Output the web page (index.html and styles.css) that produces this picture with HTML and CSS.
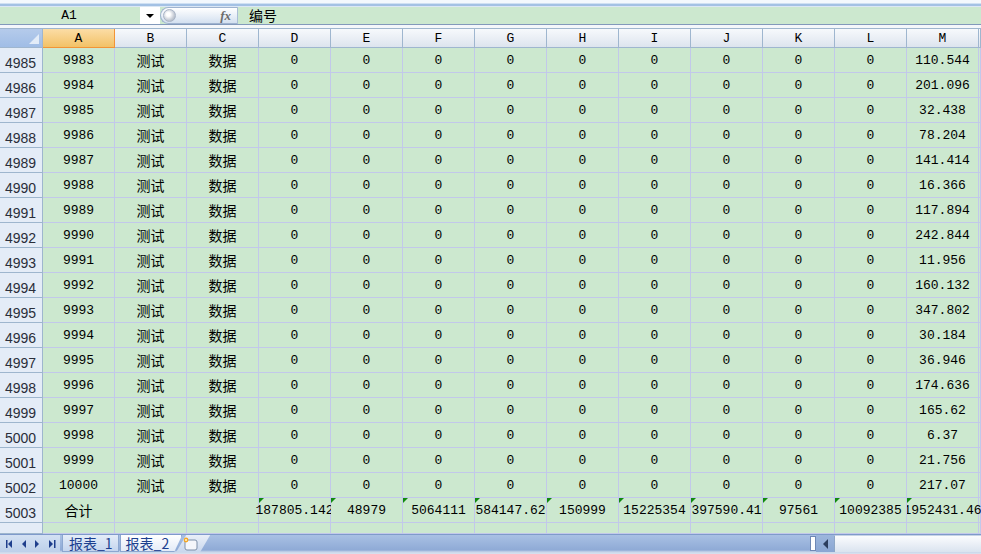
FILE: index.html
```html
<!DOCTYPE html>
<html>
<head>
<meta charset="utf-8">
<link rel="stylesheet" href="styles.css">
</head>
<body>
<div class="ribbon"></div>
<div class="fbar">
  <div class="namebox">A1</div>
  <div class="drop"></div>
  <div class="fxpill"><span class="orb"></span><span class="fx">fx</span></div>
  <div class="formula">编号</div>
</div>
<div class="gap"></div>
<div class="sheet">
  <div class="r h"><span class="corner"></span><span class="sel">A</span><span>B</span><span>C</span><span>D</span><span>E</span><span>F</span><span>G</span><span>H</span><span>I</span><span>J</span><span>K</span><span>L</span><span>M</span><span></span></div>
  <div class="r"><b>4985</b><span>9983</span><span class="zh">测试</span><span class="zh">数据</span><span>0</span><span>0</span><span>0</span><span>0</span><span>0</span><span>0</span><span>0</span><span>0</span><span>0</span><span>110.544</span><span></span></div>
  <div class="r"><b>4986</b><span>9984</span><span class="zh">测试</span><span class="zh">数据</span><span>0</span><span>0</span><span>0</span><span>0</span><span>0</span><span>0</span><span>0</span><span>0</span><span>0</span><span>201.096</span><span></span></div>
  <div class="r"><b>4987</b><span>9985</span><span class="zh">测试</span><span class="zh">数据</span><span>0</span><span>0</span><span>0</span><span>0</span><span>0</span><span>0</span><span>0</span><span>0</span><span>0</span><span>32.438</span><span></span></div>
  <div class="r"><b>4988</b><span>9986</span><span class="zh">测试</span><span class="zh">数据</span><span>0</span><span>0</span><span>0</span><span>0</span><span>0</span><span>0</span><span>0</span><span>0</span><span>0</span><span>78.204</span><span></span></div>
  <div class="r"><b>4989</b><span>9987</span><span class="zh">测试</span><span class="zh">数据</span><span>0</span><span>0</span><span>0</span><span>0</span><span>0</span><span>0</span><span>0</span><span>0</span><span>0</span><span>141.414</span><span></span></div>
  <div class="r"><b>4990</b><span>9988</span><span class="zh">测试</span><span class="zh">数据</span><span>0</span><span>0</span><span>0</span><span>0</span><span>0</span><span>0</span><span>0</span><span>0</span><span>0</span><span>16.366</span><span></span></div>
  <div class="r"><b>4991</b><span>9989</span><span class="zh">测试</span><span class="zh">数据</span><span>0</span><span>0</span><span>0</span><span>0</span><span>0</span><span>0</span><span>0</span><span>0</span><span>0</span><span>117.894</span><span></span></div>
  <div class="r"><b>4992</b><span>9990</span><span class="zh">测试</span><span class="zh">数据</span><span>0</span><span>0</span><span>0</span><span>0</span><span>0</span><span>0</span><span>0</span><span>0</span><span>0</span><span>242.844</span><span></span></div>
  <div class="r"><b>4993</b><span>9991</span><span class="zh">测试</span><span class="zh">数据</span><span>0</span><span>0</span><span>0</span><span>0</span><span>0</span><span>0</span><span>0</span><span>0</span><span>0</span><span>11.956</span><span></span></div>
  <div class="r"><b>4994</b><span>9992</span><span class="zh">测试</span><span class="zh">数据</span><span>0</span><span>0</span><span>0</span><span>0</span><span>0</span><span>0</span><span>0</span><span>0</span><span>0</span><span>160.132</span><span></span></div>
  <div class="r"><b>4995</b><span>9993</span><span class="zh">测试</span><span class="zh">数据</span><span>0</span><span>0</span><span>0</span><span>0</span><span>0</span><span>0</span><span>0</span><span>0</span><span>0</span><span>347.802</span><span></span></div>
  <div class="r"><b>4996</b><span>9994</span><span class="zh">测试</span><span class="zh">数据</span><span>0</span><span>0</span><span>0</span><span>0</span><span>0</span><span>0</span><span>0</span><span>0</span><span>0</span><span>30.184</span><span></span></div>
  <div class="r"><b>4997</b><span>9995</span><span class="zh">测试</span><span class="zh">数据</span><span>0</span><span>0</span><span>0</span><span>0</span><span>0</span><span>0</span><span>0</span><span>0</span><span>0</span><span>36.946</span><span></span></div>
  <div class="r"><b>4998</b><span>9996</span><span class="zh">测试</span><span class="zh">数据</span><span>0</span><span>0</span><span>0</span><span>0</span><span>0</span><span>0</span><span>0</span><span>0</span><span>0</span><span>174.636</span><span></span></div>
  <div class="r"><b>4999</b><span>9997</span><span class="zh">测试</span><span class="zh">数据</span><span>0</span><span>0</span><span>0</span><span>0</span><span>0</span><span>0</span><span>0</span><span>0</span><span>0</span><span>165.62</span><span></span></div>
  <div class="r"><b>5000</b><span>9998</span><span class="zh">测试</span><span class="zh">数据</span><span>0</span><span>0</span><span>0</span><span>0</span><span>0</span><span>0</span><span>0</span><span>0</span><span>0</span><span>6.37</span><span></span></div>
  <div class="r"><b>5001</b><span>9999</span><span class="zh">测试</span><span class="zh">数据</span><span>0</span><span>0</span><span>0</span><span>0</span><span>0</span><span>0</span><span>0</span><span>0</span><span>0</span><span>21.756</span><span></span></div>
  <div class="r"><b>5002</b><span>10000</span><span class="zh">测试</span><span class="zh">数据</span><span>0</span><span>0</span><span>0</span><span>0</span><span>0</span><span>0</span><span>0</span><span>0</span><span>0</span><span>217.07</span><span></span></div>
  <div class="r"><b>5003</b><span class="zh">合计</span><span></span><span></span><span class="t spill-l">187805.142</span><span class="t">48979</span><span class="t">5064111</span><span class="t">584147.62</span><span class="t">150999</span><span class="t">15225354</span><span class="t">397590.41</span><span class="t">97561</span><span class="t">10092385</span><span class="t spill-r">1952431.46</span><span></span></div>
  <div class="r part"><b></b><span></span><span></span><span></span><span></span><span></span><span></span><span></span><span></span><span></span><span></span><span></span><span></span><span></span><span></span></div>
</div>
<div class="tabbar">
  <div class="nav">
    <svg width="58" height="18" viewBox="0 0 58 18">
      <g fill="#1f3f8c">
        <rect x="6" y="5" width="1.5" height="8"/>
        <path d="M12 5 L8 9 L12 13 Z"/>
        <path d="M26 5 L22 9 L26 13 Z"/>
        <path d="M35 5 L39 9 L35 13 Z"/>
        <path d="M49 5 L53 9 L49 13 Z"/>
        <rect x="54" y="5" width="1.5" height="8"/>
      </g>
    </svg>
  </div>
  <div class="tab">报表_1</div>
  <div class="tab active">报表_2</div>
  <div class="newtab">
    <svg width="30" height="18" viewBox="0 0 30 18">
      <path d="M7 5 H17 Q19 5 19 7 V13 Q19 15 17 15 H9 Q7 15 7 13 Z" fill="#f4f6fa" stroke="#7d8fa8" stroke-width="1"/>
      <circle cx="8" cy="5" r="2.4" fill="#f5a623"/>
      <circle cx="8" cy="5" r="1.1" fill="#fff3c4"/>
    </svg>
  </div>
  <div class="fill"></div>
  <div class="split"></div>
  <div class="larrow"></div>
  <div class="track"></div>
</div>
</body>
</html>
```
FILE: styles.css
```css
* { box-sizing: border-box; }
html, body { margin: 0; padding: 0; }
body {
  width: 981px;
  height: 554px;
  overflow: hidden;
  background: #ffffff;
  font-family: "Liberation Mono", "Noto Sans CJK SC", monospace;
  font-size: 13px;
  color: #000;
}

.ribbon {
  height: 7px;
  background: linear-gradient(#f3f8fd 0 3px, #cfe0f3 3px 4px, #a3c1e4 4px 6px, #dbe7f5 6px 7px);
}

.fbar {
  display: flex;
  height: 18px;
  background: #cce8cf;
  border-bottom: 1px solid #8299bb;
}
.namebox {
  width: 140px;
  text-align: center;
  line-height: 17px;
  padding-right: 2px;
}
.drop {
  width: 20px;
  background: #fff;
  display: flex;
  align-items: center;
  justify-content: center;
}
.drop::after {
  content: "";
  border-left: 4px solid transparent;
  border-right: 4px solid transparent;
  border-top: 4px solid #000;
}
.fxpill {
  width: 77px;
  border-radius: 9px 0 0 9px;
  background: linear-gradient(#ffffff, #d3e0f0);
  border: 1px solid #9fb3cf;
  border-right: none;
  display: flex;
  align-items: center;
  justify-content: space-between;
  padding: 0 6px 0 2px;
}
.orb {
  width: 13px;
  height: 13px;
  border-radius: 50%;
  background: radial-gradient(circle at 40% 40%, #ffffff 0 20%, #c6ccd6 60%, #9aa4b3 100%);
  border: 1px solid #a8b4c6;
}
.fx {
  font-family: "Liberation Serif", serif;
  font-style: italic;
  font-weight: bold;
  font-size: 13px;
  color: #6b6b6b;
}
.formula {
  flex: 1;
  border-left: 1px solid #a9bdd6;
  padding-left: 11px;
  font-family: "Noto Sans CJK SC", sans-serif;
  font-size: 14px;
  line-height: 17px;
}

.gap {
  height: 4px;
  background: #f4f7fb;
  border-bottom: 1px solid #9eb6ce;
}

.r {
  display: grid;
  grid-template-columns: 43px repeat(13, 72px) 1fr;
  height: 25px;
}
.r > span {
  background: #cce8cf;
  border-right: 1px solid #c2c8ea;
  border-bottom: 1px solid #c2c8ea;
  display: flex;
  align-items: center;
  justify-content: center;
  white-space: nowrap;
  overflow: hidden;
  position: relative;
  padding-top: 1px;
}
.r > span.zh {
  font-family: "Noto Sans CJK SC", sans-serif;
  font-size: 14px;
  padding-top: 0;
}
.r > b {
  font-weight: normal;
  font-family: "Liberation Sans", sans-serif;
  font-size: 14px;
  color: #2a2e3a;
  background: #e4ecf7;
  border-right: 1px solid #9eb6ce;
  border-bottom: 1px solid #9eb6ce;
  display: flex;
  align-items: flex-end;
  padding: 0 0 1px 5px;
}

.r.h { height: 19px; }
.r.h > span {
  background: linear-gradient(#f7f9fc, #dde4ee);
  border-right-color: #9fb6cf;
  border-bottom-color: #9fb6cf;
  padding-top: 1px;
}
.r.h > span.corner {
  background: linear-gradient(#b5cbeb, #a0bde6);
}
.r.h > span.corner::after {
  content: "";
  position: absolute;
  right: 3px;
  bottom: 3px;
  border-left: 10px solid transparent;
  border-bottom: 10px solid #e3ecf8;
}
.r.h > span.sel {
  background: linear-gradient(#fbdda6, #f2c266);
  border-right-color: #f29436;
  border-bottom-color: #f29436;
}

.t::before {
  content: "";
  position: absolute;
  left: 0;
  top: 0;
  border-top: 5px solid #0f8a0f;
  border-right: 5px solid transparent;
}
.r > span.spill-l {
  overflow: visible;
  clip-path: inset(0 0 0 -20px);
  z-index: 1;
}
.r > span.spill-r {
  overflow: visible;
  clip-path: inset(0 -20px 0 0);
  z-index: 1;
}

.r.part { height: 11px; }

.tabbar {
  display: flex;
  height: 21px;
  background: linear-gradient(#a9c1e4, #8faad6 75%, #c9d6ea 85%, #e2e8f1);
  border-top: 1px solid #7f9acb;
}
.nav {
  width: 60px;
  background: linear-gradient(#d3e1f3, #bdd0ea);
  height: 17px;
}
.tab {
  font-family: "Noto Sans CJK SC", sans-serif;
  font-size: 14px;
  color: #1b3f8f;
  line-height: 16px;
  height: 17px;
  padding: 0 5px 0 6px;
  background: linear-gradient(#e4edf8, #c4d5ee);
  border: 1px solid #8ca7d0;
  border-top: none;
  margin-left: 2px;
}
.tab.active {
  background: linear-gradient(#ffffff, #e3ebf7);
  padding: 0 12px 0 5px;
  clip-path: polygon(0 0, 100% 0, calc(100% - 8px) 100%, 0 100%);
  margin-left: 1px;
}
.newtab {
  width: 34px;
  height: 17px;
  margin-left: -6px;
  background: linear-gradient(#e9eff8, #c8d7ed);
  clip-path: polygon(10px 0, 100% 0, calc(100% - 10px) 100%, 0 100%);
  display: flex;
  align-items: center;
  justify-content: center;
}
.fill { flex: 1; }
.split {
  width: 6px;
  height: 15px;
  margin-top: 1px;
  background: #fff;
  border: 1px solid #6f88b4;
}
.larrow {
  width: 18px;
  height: 17px;
  display: flex;
  align-items: center;
  justify-content: center;
  background: linear-gradient(#9db6dc, #8aa6d3);
}
.larrow::after {
  content: "";
  border-top: 5px solid transparent;
  border-bottom: 5px solid transparent;
  border-right: 5px solid #2c3e5e;
}
.track {
  width: 147px;
  height: 17px;
  background: linear-gradient(#fbfcfe, #dae3ef);
  border-left: 1px solid #8ea7c6;
  border-top: 1px solid #c6d3e6;
}
```
